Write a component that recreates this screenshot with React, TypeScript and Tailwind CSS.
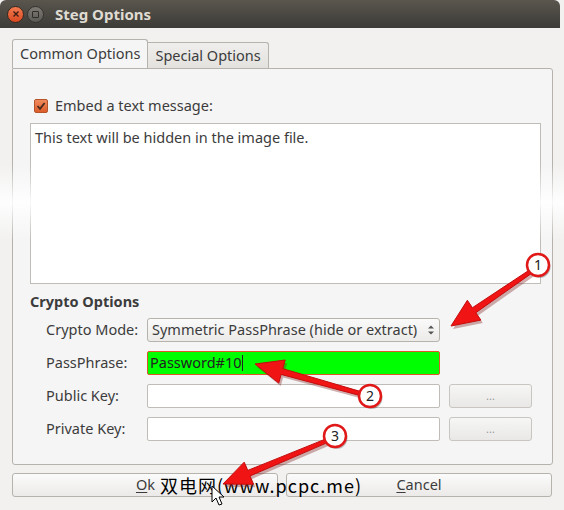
import React from "react";

const font = { fontFamily: '"Noto Sans", "Open Sans", "Noto Sans CJK SC", sans-serif' };

function Arrow({ x1, y1, x2, y2 }: { x1: number; y1: number; x2: number; y2: number }) {
  // tail (x1,y1) -> tip (x2,y2)
  const dx = x2 - x1;
  const dy = y2 - y1;
  const len = Math.hypot(dx, dy);
  const ux = dx / len;
  const uy = dy / len;
  const nx = -uy;
  const ny = ux;
  const headLen = 28;
  const headW = 12;
  const shaft = 3;
  const bx = x2 - ux * headLen;
  const by = y2 - uy * headLen;
  const pts = [
    [x1 + nx * 2, y1 + ny * 2],
    [bx + nx * shaft, by + ny * shaft],
    [bx + nx * headW, by + ny * headW],
    [x2, y2],
    [bx - nx * headW, by - ny * headW],
    [bx - nx * shaft, by - ny * shaft],
    [x1 - nx * 2, y1 - ny * 2],
  ]
    .map((p) => p.join(","))
    .join(" ");
  return (
    <g>
      <polygon points={pts} fill="#7a1a1a" opacity="0.35" transform="translate(2,3)" />
      <polygon points={pts} fill="#f01414" stroke="#c40c0c" strokeWidth="1" />
    </g>
  );
}

function Badge({ cx, cy, n }: { cx: number; cy: number; n: number }) {
  return (
    <g>
      <circle cx={cx + 1.5} cy={cy + 2} r="11" fill="#000" opacity="0.25" />
      <circle cx={cx} cy={cy} r="11" fill="#fff" stroke="#e01818" strokeWidth="2.5" />
      <text x={cx} y={cy + 5} textAnchor="middle" fontSize="14" fill="#222" fontFamily='"Noto Sans", sans-serif'>
        {n}
      </text>
    </g>
  );
}

export default function App() {
  return (
    <div className="relative w-[564px] h-[510px] overflow-hidden bg-[#f2f1f0] text-[14.5px] text-[#3c3c3c]" style={font}>
      {/* Title bar */}
      <div className="h-[28px] flex items-center pl-[7px] gap-[3px] rounded-t-[6px] mr-[4px] bg-gradient-to-b from-[#5a564e] to-[#3c3b37]">
        <div className="w-[17px] h-[17px] rounded-full bg-gradient-to-b from-[#f47a50] to-[#d9481f] border border-[#3a2a20] flex items-center justify-center">
          <svg width="8" height="8" viewBox="0 0 8 8">
            <path d="M1.5 1.5 L6.5 6.5 M6.5 1.5 L1.5 6.5" stroke="#3b1d12" strokeWidth="1.4" />
          </svg>
        </div>
        <div className="w-[17px] h-[17px] rounded-full bg-gradient-to-b from-[#7d7a74] to-[#5c5a55] border border-[#34332f] flex items-center justify-center">
          <div className="w-[7px] h-[7px] border border-[#2e2d2a] rounded-[1px]" />
        </div>
        <div className="ml-[8px] text-[15px] font-bold text-[#dfdbd2]">Steg Options</div>
      </div>

      {/* Tabs */}
      <div className="flex items-end pl-[12px] mt-[12px] h-[28px]">
        <div className="h-[29px] px-[7px] flex items-center bg-[#f5f5f5] border border-[#b6b3ad] border-b-0 rounded-t-[3px] relative z-10 text-[#3c3c3c]">
          Common Options
        </div>
        <div className="h-[26px] px-[7px] flex items-center bg-gradient-to-b from-[#efeeec] to-[#e3e2df] border border-[#b6b3ad] border-b-0 border-l-0 rounded-tr-[3px] text-[#3c3c3c]">
          Special Options
        </div>
      </div>

      {/* Panel */}
      <div className="mx-[12px] h-[397px] w-[541px] border border-[#b6b3ad] rounded-b-[3px] rounded-tr-[3px] bg-[#f5f5f5] pl-[17px] pr-[11px] pt-[27px]">
        <div className="flex items-center gap-[7px] pl-[4px] h-[20px]">
          <div className="w-[14px] h-[14px] rounded-[2px] bg-gradient-to-b from-[#f08a5d] to-[#dd5d2a] border border-[#b5532a] flex items-center justify-center">
            <svg width="10" height="10" viewBox="0 0 10 10">
              <path d="M1.5 5 L4 7.8 L8.6 2" stroke="#4a2a1c" strokeWidth="1.8" fill="none" />
            </svg>
          </div>
          <span>Embed a text message:</span>
        </div>
        <div className="mt-[7px] h-[161px] bg-white border border-[#c0bdb8] px-[4px] pt-[3px]">
          This text will be hidden in the image file.
        </div>

        <div className="mt-[7px] font-bold">Crypto Options</div>

        <div className="mt-[5px] pl-[16px] flex flex-col gap-[9px]">
          <div className="flex items-center h-[24px]">
            <span className="w-[101px]">Crypto Mode:</span>
            <div className="w-[293px] h-[24px] flex items-center justify-between pl-[4px] pr-[4px] rounded-[3px] border border-[#b6b3ad] bg-gradient-to-b from-[#fafafa] to-[#ecebe9]">
              <span>Symmetric PassPhrase (hide or extract)</span>
              <svg width="8" height="12" viewBox="0 0 8 12">
                <path d="M1 4.5 L4 1.5 L7 4.5 Z M1 7.5 L4 10.5 L7 7.5 Z" fill="#555" />
              </svg>
            </div>
          </div>
          <div className="flex items-center h-[24px]">
            <span className="w-[101px]">PassPhrase:</span>
            <div className="w-[293px] h-[24px] flex items-center px-[2px] rounded-[2px] border border-[#e0562a] bg-[#00ff00] text-[#222]">
              Password#10<span className="w-px h-[16px] bg-[#222]" />
            </div>
          </div>
          <div className="flex items-center h-[24px]">
            <span className="w-[101px]">Public Key:</span>
            <div className="w-[293px] h-[24px] rounded-[2px] border border-[#c0bdb8] bg-white" />
            <div className="ml-[9px] w-[83px] h-[24px] rounded-[3px] border border-[#c9c6c1] bg-gradient-to-b from-[#f6f6f5] to-[#e9e8e6] flex items-center justify-center text-[11px] text-[#999]">
              ...
            </div>
          </div>
          <div className="flex items-center h-[24px]">
            <span className="w-[101px]">Private Key:</span>
            <div className="w-[293px] h-[24px] rounded-[2px] border border-[#c0bdb8] bg-white" />
            <div className="ml-[9px] w-[83px] h-[24px] rounded-[3px] border border-[#c9c6c1] bg-gradient-to-b from-[#f6f6f5] to-[#e9e8e6] flex items-center justify-center text-[11px] text-[#999]">
              ...
            </div>
          </div>
        </div>
      </div>

      {/* Bottom buttons */}
      <div className="mt-[8px] flex gap-[8px] pl-[12px]">
        <div className="w-[266px] h-[24px] rounded-[3px] border border-[#b6b3ad] bg-gradient-to-b from-[#fbfbfb] to-[#eceae8] flex items-center justify-center">
          <span className="ml-[1px]">
            <span className="underline underline-offset-2">O</span>k
          </span>
        </div>
        <div className="w-[266px] h-[24px] rounded-[3px] border border-[#b6b3ad] bg-gradient-to-b from-[#fbfbfb] to-[#eceae8] flex items-center justify-center">
          <span>
            <span className="underline underline-offset-2">C</span>ancel
          </span>
        </div>
      </div>

      {/* Faded watermark band */}
      <div className="absolute left-0 right-0 top-[165px] h-[75px] pointer-events-none bg-gradient-to-b from-transparent via-white to-transparent opacity-90" />

      {/* Watermark text */}
      <div className="absolute left-[160px] top-[476px] text-[18px] text-black leading-none tracking-[1px]" style={{ fontFamily: '"Noto Sans CJK SC", "DejaVu Sans", sans-serif' }}>
        双电网(www.pcpc.me)
      </div>

      {/* Annotations */}
      <svg className="absolute left-0 top-0 pointer-events-none" width="564" height="510" viewBox="0 0 564 510">
        <Arrow x1={530} y1={272} x2={451} y2={326} />
        <Arrow x1={362} y1={394} x2={255} y2={364} />
        <Arrow x1={326} y1={441} x2={223} y2={484} />
        <Badge cx={538} cy={265} n={1} />
        <Badge cx={370} cy={396} n={2} />
        <Badge cx={335} cy={436} n={3} />
        <path d="M212 486 L212 502 L216 498 L219 505 L222 504 L219 497 L224 497 Z" fill="#fff" stroke="#000" strokeWidth="1" />
      </svg>
    </div>
  );
}
